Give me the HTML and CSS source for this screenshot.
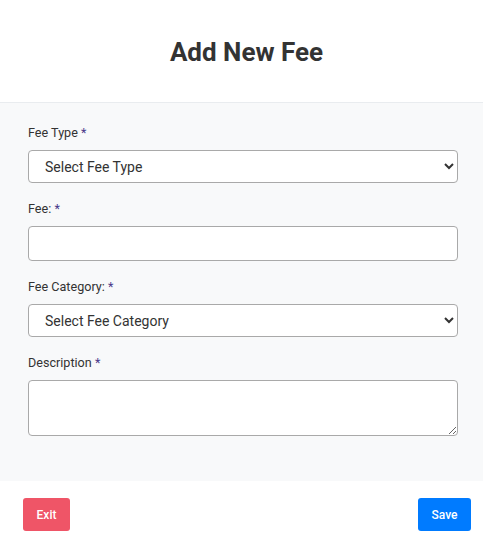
FILE: index.html
```html
<!DOCTYPE html>
<html>
<head>
<meta charset="utf-8">
<link rel="stylesheet" href="styles.css">
</head>
<body>
<div class="modal">
  <header class="modal-header">
    <h1 class="title">Add New Fee</h1>
  </header>
  <main class="modal-body">
    <div class="field">
      <label class="label">Fee Type <span class="req">*</span></label>
      <select class="control select">
        <option>Select Fee Type</option>
      </select>
    </div>
    <div class="field">
      <label class="label">Fee: <span class="req">*</span></label>
      <input class="control input" type="text">
    </div>
    <div class="field">
      <label class="label">Fee Category: <span class="req">*</span></label>
      <select class="control select">
        <option>Select Fee Category</option>
      </select>
    </div>
    <div class="field">
      <label class="label">Description <span class="req">*</span></label>
      <textarea class="control textarea"></textarea>
    </div>
  </main>
  <footer class="modal-footer">
    <button class="btn btn-exit">Exit</button>
    <button class="btn btn-save">Save</button>
  </footer>
</div>
</body>
</html>
```

FILE: styles.css
```css
* { box-sizing: border-box; }
html, body {
  margin: 0;
  padding: 0;
  background: #ffffff;
  font-family: Roboto, "Liberation Sans", sans-serif;
  color: #333333;
}
.modal {
  width: 483px;
  display: flex;
  flex-direction: column;
}
.modal-header {
  height: 103px;
  border-bottom: 1px solid #e9ecef;
  display: flex;
  align-items: center;
  justify-content: center;
  padding-left: 10px;
  background: #ffffff;
}
.title {
  margin: 0;
  font-size: 26px;
  font-weight: 700;
  color: #333333;
  line-height: 32px;
  padding-top: 2px;
}
.modal-body {
  background: #f8f9fa;
  padding: 22px 25px 45px 28px;
  display: flex;
  flex-direction: column;
  gap: 18px;
}
.field {
  display: flex;
  flex-direction: column;
}
.label {
  font-size: 12.6px;
  line-height: 16px;
  color: #333333;
  margin-bottom: 9px;
}
.req {
  color: #4a3a8a;
}
.control {
  width: 430px;
  border: 1px solid #a9a9a9;
  border-radius: 4px;
  background: #ffffff;
  font-family: Roboto, "Liberation Sans", sans-serif;
  font-size: 14px;
  color: #333333;
  margin: 0;
  outline: none;
}
.select {
  height: 33px;
  padding: 0 10px 0 12px;
}
.input {
  height: 35px;
  padding: 0 12px;
}
.textarea {
  height: 56px;
  padding: 6px 12px;
  resize: vertical;
  display: block;
}
.modal-footer {
  height: 65px;
  padding: 17px 12px 0 23px;
  display: flex;
  justify-content: space-between;
  align-items: flex-start;
  background: #ffffff;
}
.btn {
  height: 33px;
  border: none;
  border-radius: 3px;
  color: #ffffff;
  font-family: Roboto, "Liberation Sans", sans-serif;
  font-size: 12px;
  font-weight: 500;
  padding: 0;
}
.btn-exit {
  background: #ef5567;
  width: 47px;
}
.btn-save {
  background: #007bff;
  width: 53px;
}
```
